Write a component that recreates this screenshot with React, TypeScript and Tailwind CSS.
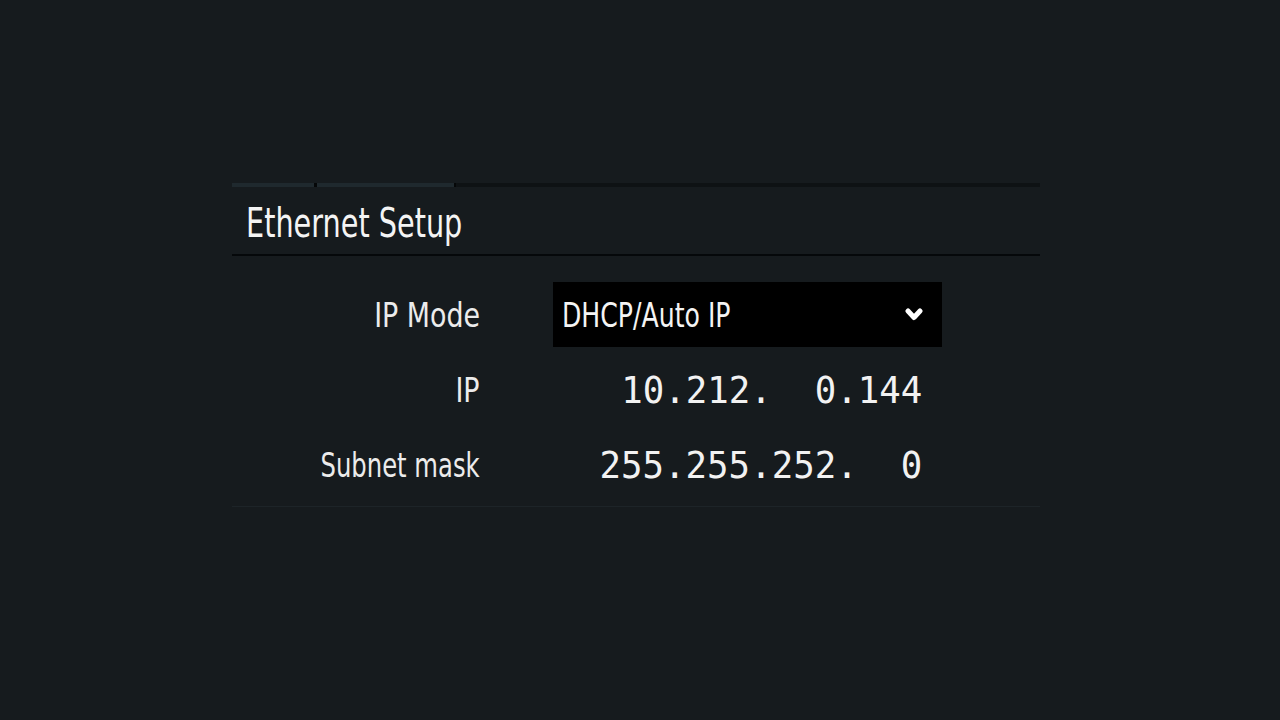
import React from "react";

const sans = { fontFamily: '"DejaVu Sans", "Noto Sans", sans-serif' };
const mono = { fontFamily: '"DejaVu Sans Mono", "Liberation Mono", monospace' };

function Chevron() {
  return (
    <svg width="18" height="13" viewBox="0 0 18 13" className="block">
      <path d="M3 3 L9 9.5 L15 3" fill="none" stroke="#ffffff" strokeWidth="5" strokeLinecap="round" strokeLinejoin="round" />
    </svg>
  );
}

function Label({ text, scale }: { text: string; scale: string }) {
  return (
    <div className="flex h-[65px] items-center justify-end">
      <span
        className={`inline-block whitespace-nowrap text-[34px] leading-none text-[#ececec] origin-right ${scale}`}
        style={sans}
      >
        {text}
      </span>
    </div>
  );
}

function Value({ text }: { text: string }) {
  return (
    <div className="flex h-[65px] items-center justify-end pr-[20px]">
      <span
        className="inline-block whitespace-pre text-[38px] leading-none text-[#f2f2f2] origin-right scale-x-[0.94]"
        style={mono}
      >
        {text}
      </span>
    </div>
  );
}

export default function App() {
  return (
    <div className="flex h-[720px] w-full justify-start bg-[#161b1e] pl-[232px]">
      <div className="mt-[183px] flex h-[324px] w-[808px] flex-col">
        {/* tab strip */}
        <div className="flex h-[4px] w-full">
          <div className="h-full w-[82px] bg-[#1f292e]" />
          <div className="h-full w-[3px] bg-[#050708]" />
          <div className="h-full w-[137px] bg-[#1f292e]" />
          <div className="h-full w-[2px] bg-[#050708]" />
          <div className="h-full flex-1 bg-[#0e1214]" />
        </div>
        {/* title */}
        <div className="flex h-[67px] items-center pl-[14px] pt-[6px]">
          <span
            className="inline-block whitespace-nowrap text-[41px] leading-none text-[#f4f4f4] origin-left scale-x-[0.7]"
            style={sans}
          >
            Ethernet Setup
          </span>
        </div>
        <div className="h-[2px] w-full bg-[#05080a]" />
        {/* form */}
        <div className="grid grid-cols-[248px_389px] gap-x-[73px] gap-y-[10px] pt-[26px] pb-[9px]">
          <Label text="IP Mode" scale="scale-x-[0.79]" />
          <div className="flex h-[65px] items-center justify-between bg-black pl-[9px] pr-[19px]">
            <span
              className="inline-block whitespace-nowrap text-[34px] leading-none text-[#f4f4f4] origin-left scale-x-[0.74]"
              style={sans}
            >
              DHCP/Auto IP
            </span>
            <Chevron />
          </div>
          <Label text="IP" scale="scale-x-[0.79]" />
          <Value text={"10.212.  0.144"} />
          <Label text="Subnet mask" scale="scale-x-[0.715]" />
          <Value text={"255.255.252.  0"} />
        </div>
        <div className="h-px w-full bg-[#1d2428]" />
      </div>
    </div>
  );
}
